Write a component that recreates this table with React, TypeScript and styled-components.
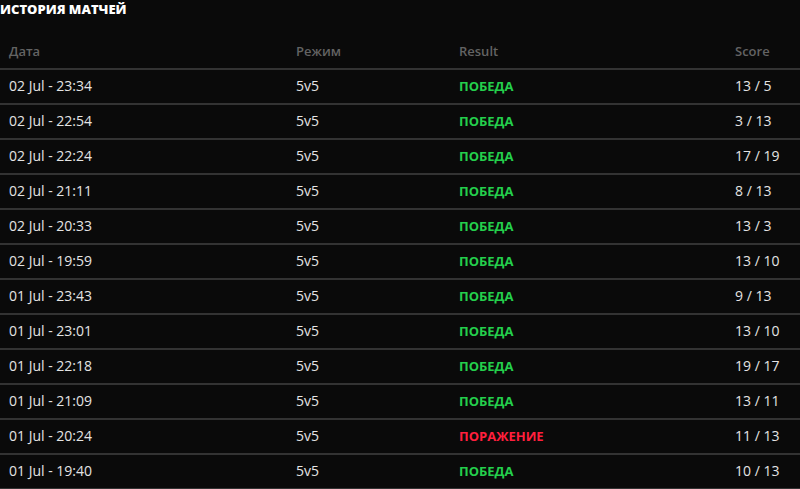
import React from "react";
import styled, { createGlobalStyle } from "styled-components";

const Global = createGlobalStyle`
  html, body { margin: 0; padding: 0; background: #0a0a0a; }
  body { font-family: "Open Sans", "Noto Sans", sans-serif; }
`;

const Page = styled.div`
  width: 800px;
  height: 489px;
  background: #0a0a0a;
  overflow: hidden;
`;

const Title = styled.h1`
  margin: 0;
  height: 35px;
  padding-top: 1px;
  box-sizing: border-box;
  font-size: 13px;
  line-height: 16px;
  font-weight: 800;
  color: #ffffff;
`;

const Row = styled.div<{ $head?: boolean }>`
  display: grid;
  grid-template-columns: 287px 163px 276px 1fr;
  box-sizing: border-box;
  height: 35px;
  padding-bottom: 2px;
  align-items: center;
  border-bottom: 2px solid #333333;
  font-size: ${(p) => (p.$head ? "13px" : "14px")};
  font-weight: ${(p) => (p.$head ? 600 : 500)};
  color: ${(p) => (p.$head ? "#636363" : "#e4e4e4")};
`;

const Cell = styled.div`
  padding-left: 9px;
  white-space: nowrap;
`;

const ResultCell = styled(Cell)<{ $win: boolean }>`
  font-size: 13px;
  font-weight: 700;
  color: ${(p) => (p.$win ? "#24cf4c" : "#ff1f3d")};
`;

const matches = [
  ["02 Jul - 23:34", "13 / 5", true],
  ["02 Jul - 22:54", "3 / 13", true],
  ["02 Jul - 22:24", "17 / 19", true],
  ["02 Jul - 21:11", "8 / 13", true],
  ["02 Jul - 20:33", "13 / 3", true],
  ["02 Jul - 19:59", "13 / 10", true],
  ["01 Jul - 23:43", "9 / 13", true],
  ["01 Jul - 23:01", "13 / 10", true],
  ["01 Jul - 22:18", "19 / 17", true],
  ["01 Jul - 21:09", "13 / 11", true],
  ["01 Jul - 20:24", "11 / 13", false],
  ["01 Jul - 19:40", "10 / 13", true],
] as const;

export default function App() {
  return (
    <Page>
      <Global />
      <Title>ИСТОРИЯ МАТЧЕЙ</Title>
      <Row $head>
        <Cell>Дата</Cell>
        <Cell>Режим</Cell>
        <Cell>Result</Cell>
        <Cell>Score</Cell>
      </Row>
      {matches.map(([date, score, win], i) => (
        <Row key={i}>
          <Cell>{date}</Cell>
          <Cell>5v5</Cell>
          <ResultCell $win={win}>{win ? "ПОБЕДА" : "ПОРАЖЕНИЕ"}</ResultCell>
          <Cell>{score}</Cell>
        </Row>
      ))}
    </Page>
  );
}
